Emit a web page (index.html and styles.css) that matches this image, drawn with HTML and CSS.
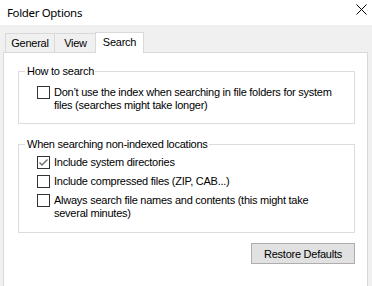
FILE: index.html
```html
<!DOCTYPE html>
<html>
<head>
<meta charset="utf-8">
<link rel="stylesheet" href="styles.css">
</head>
<body>
<div class="window">
  <div class="titlebar">
    <span class="title">Folder Options</span>
    <svg class="close" width="11" height="11" viewBox="0 0 11 11"><path d="M0.5 0.5 L10.5 10.5 M10.5 0.5 L0.5 10.5" stroke="#000" stroke-width="1" fill="none"/></svg>
  </div>
  <div class="body">
    <div class="tabs">
      <div class="tab-gap"></div>
      <div class="tab tab-general">General</div>
      <div class="tab tab-view">View</div>
      <div class="tab tab-search active">Search</div>
      <div class="tab-fill"></div>
    </div>
    <div class="panel">
      <fieldset class="group group-first">
        <legend>How to search</legend>
        <div class="row">
          <span class="box"></span>
          <span class="label">Don’t use the index when searching in file folders for system<br>files (searches might take longer)</span>
        </div>
      </fieldset>
      <fieldset class="group group-second">
        <legend>When searching non-indexed locations</legend>
        <div class="rows">
          <div class="row">
            <span class="box checked"><svg width="11" height="11" viewBox="0 0 11 11"><path d="M1.5 5.5 L4 8 L9.5 2.5" stroke="#6b6b6b" stroke-width="1.4" fill="none"/></svg></span>
            <span class="label">Include system directories</span>
          </div>
          <div class="row">
            <span class="box"></span>
            <span class="label">Include compressed files (ZIP, CAB...)</span>
          </div>
          <div class="row">
            <span class="box"></span>
            <span class="label">Always search file names and contents (this might take<br>several minutes)</span>
          </div>
        </div>
      </fieldset>
      <div class="actions">
        <button class="btn">Restore Defaults</button>
      </div>
    </div>
  </div>
</div>
</body>
</html>
```
FILE: styles.css
```css
html, body {
  margin: 0;
  padding: 0;
  height: 100%;
  overflow: hidden;
}
body {
  background: #f0f0f0;
  font-family: "Liberation Sans", Arial, sans-serif;
  font-size: 11px;
  color: #000;
}
.window {
  display: flex;
  flex-direction: column;
  height: 286px;
}
.titlebar {
  height: 25px;
  background: #fff;
  display: flex;
  align-items: center;
  justify-content: space-between;
  padding: 0 5px 0 7px;
  flex: none;
}
.title {
  font-family: "Noto Sans", "Open Sans", sans-serif;
  font-size: 11.5px;
  letter-spacing: -0.35px;
  margin-top: -1px;
}
.close {
  margin-top: -6px;
}
.body {
  flex: 1;
  display: flex;
  flex-direction: column;
  padding: 7px 4px 0 3px;
  min-height: 0;
}
.tabs {
  display: flex;
  align-items: flex-end;
  height: 21px;
  flex: none;
}
.tab-gap {
  width: 2px;
  height: 0;
  border-bottom: 1px solid #d9d9d9;
}
.tab-fill {
  flex: 1;
  height: 0;
  border-bottom: 1px solid #d9d9d9;
}
.tab {
  box-sizing: border-box;
  height: 20px;
  line-height: 18px;
  text-align: center;
  border: 1px solid #d9d9d9;
  border-right: none;
  background: #f0f0f0;
  letter-spacing: -0.25px;
}
.tab-general {
  width: 49px;
}
.tab-view {
  width: 41px;
  padding-left: 1px;
}
.tab-search {
  width: 49px;
}
.tab.active {
  height: 21px;
  line-height: 19px;
  border-right: 1px solid #d9d9d9;
  border-bottom: none;
  background: #fff;
}
.panel {
  flex: 1;
  background: #fff;
  border: 1px solid #d9d9d9;
  border-top: none;
  border-bottom: none;
  padding: 12px 12px 0 14px;
  display: flex;
  flex-direction: column;
}
.group {
  margin: 0;
  border: 1px solid #dcdcdc;
  padding: 8px 10px 11px 18px;
  min-width: 0;
}
.group legend {
  padding: 0 1px 0 2px;
  margin-left: -12px;
  line-height: 13px;
  letter-spacing: -0.25px;
}
.group-second {
  margin-top: 14px;
  padding-top: 5px;
  padding-bottom: 12px;
}
.rows {
  display: flex;
  flex-direction: column;
  gap: 6px;
}
.row {
  display: flex;
  align-items: flex-start;
  gap: 4px;
  line-height: 13px;
}
.box {
  width: 11px;
  height: 11px;
  border: 1px solid #333;
  flex: none;
  background: #fff;
  display: flex;
  align-items: center;
  justify-content: center;
}
.label {
  letter-spacing: -0.25px;
}
.actions {
  display: flex;
  justify-content: flex-end;
  margin-top: 10px;
}
.btn {
  width: 104px;
  height: 21px;
  border: 1px solid #adadad;
  background: #e1e1e1;
  font-family: "Liberation Sans", Arial, sans-serif;
  font-size: 11px;
  letter-spacing: -0.25px;
  color: #000;
  padding: 0;
  margin: 0;
}
```
